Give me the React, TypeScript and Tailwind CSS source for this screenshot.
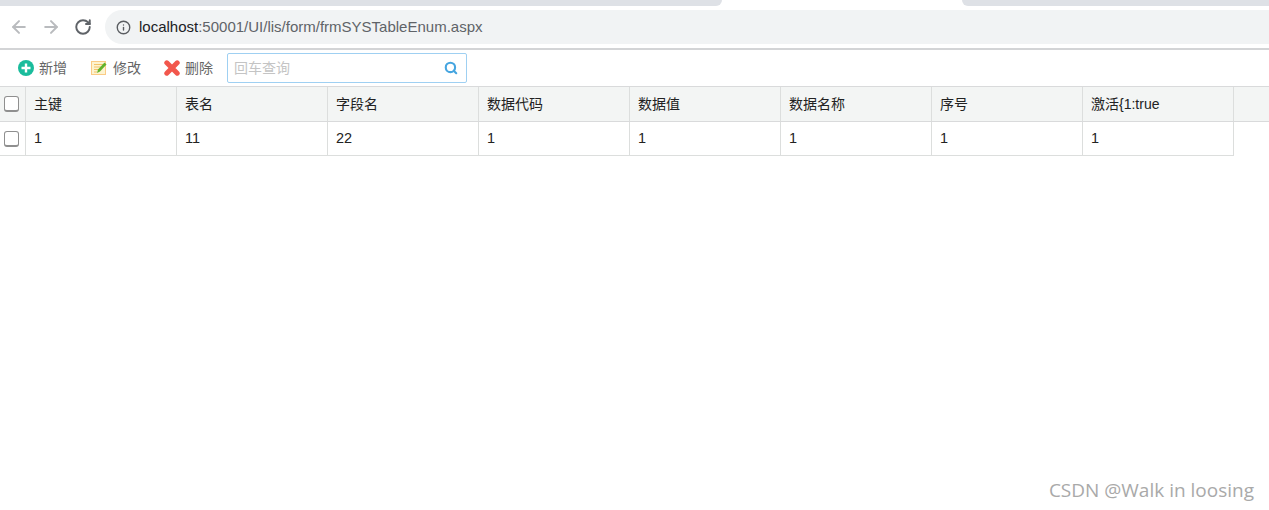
import { ArrowLeft, ArrowRight, RotateCw, Info, Search } from "lucide-react";

const columns = ["主键", "表名", "字段名", "数据代码", "数据值", "数据名称", "序号", "激活{1:true"];
const row = ["1", "11", "22", "1", "1", "1", "1", "1"];

function CheckBox() {
  return <span className="block h-[16px] w-[15px] rounded-[3px] border border-[#8f8f8f] border-b-2 bg-white" />;
}

function AddIcon() {
  return (
    <svg width="16" height="16" viewBox="0 0 16 16">
      <circle cx="8" cy="8" r="8" fill="#1abc9c" />
      <path d="M8 3.5v9M3.5 8h9" stroke="#fff" strokeWidth="2.4" />
    </svg>
  );
}

function EditIcon() {
  return (
    <svg width="16" height="16" viewBox="0 0 16 16">
      <rect x="0.5" y="1.5" width="14" height="13" fill="#fdf3d0" stroke="#fbcb85" />
      <path d="M3 4.5h9M3 7h7M3 9.5h5M3 12h3" stroke="#f3c36a" />
      <path d="M6 13l1-3.5L13.5 2.5l2 2-6.500 7z" fill="#62b32c" />
    </svg>
  );
}

function DeleteIcon() {
  return (
    <svg width="16" height="16" viewBox="0 0 16 16">
      <path d="M2.800 2.800l10.400 10.400M13.200 2.800L2.800 13.200" stroke="#f2574c" strokeWidth="5" strokeLinecap="round" />
    </svg>
  );
}

function ToolButton({ icon, label, className }: { icon: React.ReactNode; label: string; className: string }) {
  return (
    <div className={`flex items-center gap-[5px] text-[14px] text-[#666] ${className}`}>
      {icon}
      <span>{label}</span>
    </div>
  );
}

export default function App() {
  return (
    <div className="relative h-[510px] w-[1269px] overflow-hidden bg-white font-['Liberation_Sans','Noto_Sans_CJK_SC',sans-serif]">
      {/* Tab strip */}
      <div className="flex h-[6px] bg-white">
        <div className="w-[722px] rounded-br-lg bg-[#dee1e6]" />
        <div className="w-[240px] bg-white" />
        <div className="flex-1 rounded-bl-lg bg-[#dee1e6]" />
      </div>

      {/* Browser bar */}
      <div className="flex h-[44px] items-start border-b-2 border-[#d3d4d6] pt-1">
        <div className="flex h-[34px] w-[105px] items-center text-[#b9bbbe]">
          <ArrowLeft size={20} strokeWidth={2.4} className="ml-[9px]" />
          <ArrowRight size={20} strokeWidth={2.4} className="ml-[12px]" />
          <RotateCw size={18} strokeWidth={2.6} className="ml-[13px] text-[#5f6368]" />
        </div>
        <div className="flex h-[34px] flex-1 items-center rounded-l-[17px] bg-[#f1f3f4] pl-[11px] text-[15px] text-[#5f6368]">
          <Info size={15} strokeWidth={2.2} className="text-[#5a5d61]" />
          <span className="ml-2">
            <span className="text-[#202124]">localhost</span>:50001/UI/lis/form/frmSYSTableEnum.aspx
          </span>
        </div>
      </div>

      {/* Toolbar */}
      <div className="flex h-[36px] items-center">
        <ToolButton icon={<AddIcon />} label="新增" className="ml-[18px]" />
        <ToolButton icon={<EditIcon />} label="修改" className="ml-[24px] gap-[6px]" />
        <ToolButton icon={<DeleteIcon />} label="删除" className="ml-[23px]" />
        <div className="ml-[14px] flex h-[30px] w-[240px] items-center justify-between rounded-[2px] border border-[#9fd0f2] pl-[6px] pr-[8px] text-[14px] text-[#c4c4c4]">
          <span>回车查询</span>
          <Search size={14} strokeWidth={3.6} className="text-[#45a5e0]" />
        </div>
      </div>

      {/* Table */}
      <div className="flex h-[36px] border-y border-[#d9dadb] bg-[#f3f5f4] text-[14px] text-[#222]">
        <div className="flex w-[26px] shrink-0 items-center border-r border-[#dcdedd] pl-1">
          <CheckBox />
        </div>
        {columns.map((c) => (
          <div key={c} className="flex w-[151px] shrink-0 items-center border-r border-[#dcdedd] pl-2">
            {c}
          </div>
        ))}
      </div>
      <div className="flex h-[34px] w-[1234px] border-b border-[#dcdedd] text-[14.5px] text-[#222]">
        <div className="flex w-[26px] shrink-0 items-center border-r border-[#dcdedd] pl-1">
          <CheckBox />
        </div>
        {row.map((v, i) => (
          <div key={i} className="flex w-[151px] shrink-0 items-center border-r border-[#dcdedd] pl-2 pt-px">
            {v}
          </div>
        ))}
      </div>

      {/* Watermark */}
      <div className="absolute bottom-[6px] right-[15px] font-['Open_Sans',sans-serif] text-[19px] text-[#a9a9a9]">CSDN @Walk in loosing</div>
    </div>
  );
}
